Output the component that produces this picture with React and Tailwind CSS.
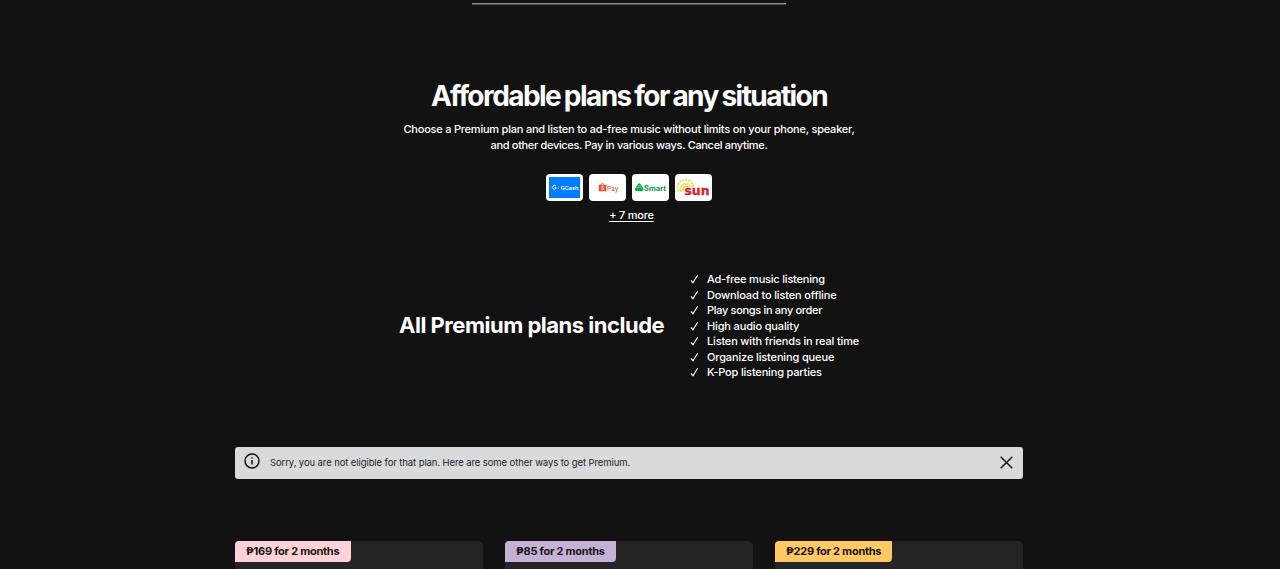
import * as React from "react"
import clsx from "clsx"

const benefits = [
  { text: "Ad-free music listening", className: "tracking-[-0.2px]" },
  { text: "Download to listen offline", className: "tracking-[-0.14px]" },
  { text: "Play songs in any order", className: "tracking-[-0.32px]" },
  { text: "High audio quality", className: "tracking-[-0.15px]" },
  { text: "Listen with friends in real time", className: "tracking-[-0.17px]" },
  { text: "Organize listening queue", className: "tracking-[-0.14px]" },
  { text: "K-Pop listening parties", className: "tracking-[-0.17px]" },
]

const plans = [
  { offer: "₱169 for 2 months", className: "w-[116px] bg-[#ffd2d7]" },
  { offer: "₱85 for 2 months", className: "w-[111px] bg-[#c4b1d4]" },
  { offer: "₱229 for 2 months", className: "w-[117px] bg-[#ffc862]" },
]

function Check() {
  return (
    <svg className="shrink-0" width="9" height="9" viewBox="0 0 9 9" fill="none" stroke="#fff" strokeWidth="1.1">
      <path d="M1 5.3 3 7.7 7.6 0.3" />
    </svg>
  )
}

function GCash() {
  return (
    <div className="h-[27px] w-[37px] rounded-[4px] bg-white p-[3px]">
      <svg width="31" height="21" viewBox="0 0 31 21">
        <rect width="31" height="21" fill="#007dfe" />
        <path d="M7 9.3a1.9 1.9 0 1 0 .2 1.5H5.6" fill="none" stroke="#fff" strokeWidth="0.9" />
        <path d="M9.2 9.4q.8 1.200 0 2.600" fill="none" stroke="#9fd0ff" strokeWidth="0.8" />
        <text x="11.5" y="12.5" fill="#fff" fontSize="5" fontWeight="600" fontFamily="Inter, sans-serif" textLength="18" lengthAdjust="spacingAndGlyphs">GCash</text>
      </svg>
    </div>
  )
}

function ShopeePay() {
  return (
    <svg className="rounded-[4px] bg-white" width="37" height="27" viewBox="0 0 37 27">
      <path d="M9.7 10.8h7.6v6.4H9.7z" fill="#e4533b" />
      <path d="M12 11a1.5 1.6 0 0 1 3 0" fill="none" stroke="#e4533b" strokeWidth="0.8" />
      <path d="M14.7 12.4c-2-.8-2.8.8-1.3 1.4 2 .7 1.4 2.4-.8 1.6" fill="none" stroke="#fff" strokeWidth="0.9" />
      <text x="18" y="16.5" fill="#e4604a" fontSize="6.5" fontWeight="500" fontFamily="Inter, sans-serif" textLength="11.500" lengthAdjust="spacingAndGlyphs">Pay</text>
    </svg>
  )
}

function Smart() {
  return (
    <svg className="rounded-[4px] bg-white" width="37" height="27" viewBox="0 0 37 27">
      <path d="M7.2 9.2c1 0 1.5.7 2 1.8l2 3.2c.9 1.6 0 3-1.7 3H5c-1.7 0-2.6-1.400-1.700-3l2-3.200c.5-1.100 1-1.800 1.900-1.800z" fill="#16a34c" />
      <path d="M4.2 14.200q3-2.300 6 0M5.400 12.100q1.800-1.200 3.600 0" fill="none" stroke="#8fd6c8" strokeWidth="0.7" />
      <text x="12" y="16.600" fill="#109c45" fontSize="7" fontWeight="700" fontFamily="Inter, sans-serif" textLength="22" lengthAdjust="spacingAndGlyphs">Smart</text>
    </svg>
  )
}

function Sun() {
  return (
    <svg className="rounded-[4px] bg-white" width="37" height="27" viewBox="0 0 37 27">
      <g fill="none" stroke="#f3dc58">
        <path d="M3.500 17.500a8 8 0 1 1 15-4.500" strokeWidth="1.700" strokeDasharray="2.500 0.700" />
        <path d="M6 18a5.500 5.500 0 1 1 10-4.500" strokeWidth="1.900" strokeDasharray="2 0.400" />
        <path d="M8.300 17a3 3 0 1 1 5.400-3" strokeWidth="1.700" />
      </g>
      <text x="9.500" y="20.800" fill="#d9202c" stroke="#d9202c" strokeWidth="0.300" fontSize="12" fontWeight="700" fontFamily="DejaVu Sans, sans-serif" textLength="25" lengthAdjust="spacingAndGlyphs">sun</text>
    </svg>
  )
}

export default function App() {
  return (
    <div className="h-[569px] overflow-hidden bg-[#121212] font-['Inter',sans-serif] text-white">
      <main className="flex w-[1258px] flex-col items-center">
        <div className="mt-[3px] h-[2px] w-[314px] border-t border-[#8b8b8b] bg-[#4a4a4a]" />

        <section className="flex flex-col items-center">
          <h1 className="mt-[73px] text-[28px] leading-[36px] font-bold tracking-[-1.56px] [word-spacing:-1.4px] whitespace-nowrap">
            Affordable plans for any situation
          </h1>
          <p className="mt-[8px] flex flex-col items-center text-[11px] leading-[15.5px] font-medium whitespace-nowrap">
            <span className="tracking-[-0.22px]">
              Choose a Premium plan and listen to ad-free music without limits on your phone, speaker,
            </span>
            <span className="tracking-[-0.33px]">and other devices. Pay in various ways. Cancel anytime.</span>
          </p>
          <div className="mt-[21px] flex gap-[6px]">
            <GCash />
            <ShopeePay />
            <Smart />
            <Sun />
          </div>
          <a
            className="mt-[6px] ml-[5px] text-[11px] leading-[16px] font-medium tracking-[-0.25px] underline underline-offset-2"
            href="#"
          >
            + 7 more
          </a>
        </section>

        <section className="mt-[49px] flex w-[460px] items-center justify-between">
          <h2 className="-mt-[2px] text-[22px] leading-[28px] font-bold tracking-[-0.49px] whitespace-nowrap">
            All Premium plans include
          </h2>
          <ul className="w-[169px] text-[11px] leading-[15.5px] font-medium">
            {benefits.map((item) => (
              <li key={item.text} className="flex items-center gap-2 whitespace-nowrap">
                <Check />
                <span className={item.className}>{item.text}</span>
              </li>
            ))}
          </ul>
        </section>

        <div className="mt-[66px] flex h-8 w-[788px] items-center rounded-[3px] bg-[#d9dadc] pl-[9px] text-[#232323]">
          <svg className="-mt-[3px]" width="16" height="16" viewBox="0 0 16 16" fill="none" stroke="#111" strokeWidth="1.5">
            <circle cx="8" cy="8" r="7" />
            <path d="M8 7v4.500M8 4.200v1.400" />
          </svg>
          <p className="ml-[10px] text-[9.5px] leading-[14px] tracking-[-0.1px] whitespace-nowrap">
            Sorry, you are not eligible for that plan. Here are some other ways to get Premium.
          </p>
          <button className="mr-[10px] ml-auto" aria-label="Close">
            <svg width="13" height="13" viewBox="0 0 13 13" stroke="#111" strokeWidth="1.5">
              <path d="M0.7 0.7l11.6 11.6M12.3 0.7L0.7 12.3" />
            </svg>
          </button>
        </div>

        <section className="mt-[62px] flex w-[788px] justify-between">
          {plans.map((plan) => (
            <div key={plan.offer} className="h-[60px] w-[248px] rounded-[5px] bg-[#242424]">
              <div
                className={clsx(
                  "h-[21px] rounded-tl-[4px] rounded-br-[4px] pl-[11px] text-[11px] leading-[20px] font-bold tracking-[-0.26px] whitespace-nowrap text-[#151515]",
                  plan.className
                )}
              >
                {plan.offer}
              </div>
            </div>
          ))}
        </section>
      </main>
    </div>
  )
}
